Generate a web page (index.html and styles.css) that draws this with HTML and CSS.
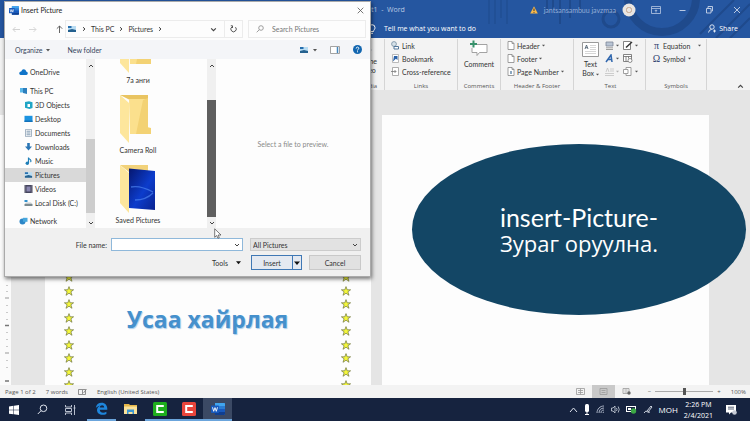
FILE: index.html
```html
<!DOCTYPE html>
<html lang="en">
<head>
<meta charset="utf-8">
<title>Insert Picture</title>
<link rel="stylesheet" href="styles.css">
</head>
<body>
<svg class="defs" aria-hidden="true">
  <symbol id="star" viewBox="0 0 10 10"><path d="M5 .6 6.2 3.8H9.6L6.9 5.8 8 9.3 5 7.2 2 9.3 3.1 5.8.4 3.8H3.8Z" fill="#f4f73c" stroke="#6d7440" stroke-width=".7"/></symbol>
  <symbol id="down" viewBox="0 0 6 6"><path d="M1 2l2 2 2-2" fill="none" stroke="#444" stroke-width="1"/></symbol>
  <symbol id="up" viewBox="0 0 6 6"><path d="M1 4l2-2 2 2" fill="none" stroke="#444" stroke-width="1"/></symbol>
  <symbol id="tri" viewBox="0 0 4 4"><path d="M0 1h4L2 3.4z" fill="#555"/></symbol>
  <symbol id="right" viewBox="0 0 4 6"><path d="M1 1.2l2 1.8-2 1.8" fill="none" stroke="#444"/></symbol>
  <symbol id="pic" viewBox="0 0 10 8"><path d="M1 1h8v6H1z" fill="#b9dcf2"/><path d="M1 1h3.500v2H1z" fill="#276fae"/><path d="M1 5l4-1 4 1v2H1z" fill="#24618f"/></symbol>
  <symbol id="word" viewBox="0 0 14 12"><path d="M4 0h9q1 0 1 1v10q0 1-1 1H4z" fill="#2b7cd3"/><path d="M4 0h9q1 0 1 1v2H4z" fill="#41a5ee"/><path d="M4 6h10v3H4z" fill="#185abd"/><path d="M4 9h10v2q0 1-1 1H4z" fill="#103f91"/><rect y="2.500" width="8" height="7.500" rx=".7" fill="#185abd"/><path d="M1.500 4.300l1.200 4L4 4.600l1.300 3.700 1.200-4" fill="none" stroke="#fff" stroke-width=".9"/></symbol>
  <symbol id="folder" viewBox="0 0 38 48"><path d="M1 0h28v5h-18z" fill="#e9c461"/><path d="M10 4h19v28l3 1v6H11z" fill="#fbe08d"/><path d="M29 3v30h3v6H17L24 5z" fill="#f3d274"/><path d="M1 0l9 8v40L1 38z" fill="#fde69c"/></symbol>
  <symbol id="page" viewBox="0 0 8 9"><path d="M1 .5h4l2 2v6H1zM5 .5v2h2" fill="#fff" stroke="#888" stroke-width=".8"/></symbol>
</svg>

<header class="titlebar">
  <svg class="swirls" viewBox="0 0 380 38" aria-hidden="true"><g fill="none" stroke="#1f4a8c"><circle cx="292" cy="-2" r="34" stroke-width="8"/><circle cx="241" cy="19" r="8" stroke-width="3"/><path d="M119 0v24M125 0v24M131 0v18M137 0v24" stroke-width="1"/><path d="M346 38l34-34M330 34l34-34M360 38l20-20" stroke-width="2"/><path d="M177 0v14M183 0v10M190 0v24M200 0v18M210 0v12" stroke-width="2"/></g></svg>
  <div class="title-row">
    <span class="doc-name">t1 &nbsp;-&nbsp; Word</span>
    <span class="account">
      <svg width="8" height="8" viewBox="0 0 8 8"><path d="M4 .3 7.800 7.500H.2z" fill="#f8b84a"/><path d="M4 2.500v2.600M4 6v.8" stroke="#333"/></svg>
      <span>jantsansambuu javzmaa</span>
      <svg width="14" height="14" viewBox="0 0 14 14"><circle cx="7" cy="7" r="6.500" fill="#e9e5e2"/><rect x="4.500" y="4.500" width="5" height="5" rx="2" fill="none" stroke="#c4a58c"/></svg>
    </span>
    <span class="window-buttons">
      <button aria-label="Ribbon display options"><svg width="10" height="8" viewBox="0 0 10 8"><path d="M.5.500h9v7h-9zM.5 2.500h9M5 6.500V4M3.800 5 5 3.800 6.200 5" fill="none" stroke="#b9c9e3" stroke-width=".8"/></svg></button>
      <button aria-label="Minimize"><svg width="7" height="8" viewBox="0 0 7 8"><path d="M.5 4.500h6" stroke="#b9c9e3"/></svg></button>
      <button aria-label="Restore"><svg width="7" height="8" viewBox="0 0 7 8"><path d="M.5 2.500h4.500v4.500H.5zM2 2.500v-2h4.500V5H5" fill="none" stroke="#c9d5e9" stroke-width=".9"/></svg></button>
      <button aria-label="Close"><svg width="8" height="8" viewBox="0 0 8 8"><path d="M1 1l6 6M7 1 1 7" stroke="#c9d5e9" stroke-width=".9"/></svg></button>
    </span>
  </div>
  <div class="tab-row">
    <svg width="8" height="10" viewBox="0 0 8 10"><path d="M2.500 7.500C2.500 6 1 5.500 1 3.700a3 3 0 0 1 6 0C7 5.500 5.500 6 5.500 7.500zM3 9.300h2" fill="none" stroke="#fff"/></svg>
    <span class="tell">Tell me what you want to do</span>
    <button class="share"><svg width="8" height="9" viewBox="0 0 8 9"><circle cx="4" cy="3" r="2.200" fill="none" stroke="#fff" stroke-width=".8"/><path d="M.5 8.500q.5-3 3-3M5 7h3M6.500 5.500v3" fill="none" stroke="#fff" stroke-width=".8"/></svg>Share</button>
  </div>
</header>

<section class="ribbon" aria-label="Insert tab">
  <div class="group media"><div class="big"><svg width="10" height="16" viewBox="0 0 10 16"><circle cx="5" cy="11" r="4" fill="none" stroke="#a9b8c9"/><path d="M1 11h8M5 7v8" stroke="#a9b8c9"/></svg><span>Online<br>Video</span></div><h2>Media</h2></div>
  <div class="group links">
    <div class="lines">
      <button><svg width="9" height="9" viewBox="0 0 9 9"><circle cx="3" cy="3" r="2.400" fill="#d6e2ea" stroke="#748b9e" stroke-width=".8"/><path d="M3 5.500h4.500v2.500H3z" fill="#fff" stroke="#52779b"/></svg>Link</button>
      <button><svg width="9" height="9" viewBox="0 0 9 9"><path d="M1.500.500h6v8h-6z" fill="#fff" stroke="#aaa" stroke-width=".8"/><path d="M3 2h3.500v4L4.800 4.800 2 7.500z" fill="#2b62a8"/></svg>Bookmark</button>
      <button><svg width="9" height="9" viewBox="0 0 9 9"><path d="M1.500.500h6v8h-6z" fill="#fff" stroke="#999" stroke-width=".8"/><path d="M0 4.500h5M3.500 3 5 4.500 3.500 6" fill="none" stroke="#777" stroke-width=".8"/></svg>Cross-reference</button>
    </div><h2>Links</h2></div>
  <div class="group comments"><button class="big"><svg width="18" height="18" viewBox="0 0 18 18"><path d="M5 4.500h12v8H9.500L7 15.500v-3H2V8" fill="#fff" stroke="#999" stroke-width=".9"/><path d="M3.500.5v7M0 4h7" stroke="#38926c" stroke-width="2"/></svg><span>Comment</span></button><h2>Comments</h2></div>
  <div class="group headfoot">
    <div class="lines">
      <button><svg width="8" height="9"><use href="#page"/></svg>Header <svg class="t" width="3" height="3"><use href="#tri"/></svg></button>
      <button><svg width="8" height="9"><use href="#page"/></svg>Footer <svg class="t" width="3" height="3"><use href="#tri"/></svg></button>
      <button><svg width="8" height="9" viewBox="0 0 8 9"><use href="#page"/><path d="M3 4h2v3H3z" fill="#8aa6bf"/></svg>Page Number <svg class="t" width="3" height="3"><use href="#tri"/></svg></button>
    </div><h2>Header &amp; Footer</h2></div>
  <div class="group text">
    <div class="text-tools">
      <button class="big"><svg width="17" height="15" viewBox="0 0 17 15"><path d="M.5.500h16v14H.5z" fill="#fff" stroke="#999"/><path d="M3 7l1.500-4L6 7M3.500 5.700h2" fill="none" stroke="#456" stroke-width=".8"/><path d="M8 3.500h6M8 5.500h6M8 7.500h6M3 9.500h11M3 11.500h11" stroke="#ccc" stroke-width=".8"/></svg><span>Text<br>Box <svg class="t" width="3" height="3"><use href="#tri"/></svg></span></button>
      <div class="minis">
        <button aria-label="Quick Parts"><svg width="9" height="9" viewBox="0 0 9 9"><path d="M1 1h7v4H1z" fill="#b8c4d4" stroke="#7b8798" stroke-width=".8"/><path d="M1 6.800h7M1 8.500h7" stroke="#888" stroke-width=".8"/></svg><svg class="t" width="3" height="3"><use href="#tri"/></svg></button>
        <button aria-label="Signature Line"><svg width="10" height="9" viewBox="0 0 10 9"><path d="M.5.500h7v8h-7z" fill="#fff" stroke="#666" stroke-width=".8"/><path d="M3 6.500 9 1" stroke="#333" stroke-width="1.500"/></svg><svg class="t" width="3" height="3"><use href="#tri"/></svg></button>
        <button aria-label="WordArt"><svg width="9" height="9" viewBox="0 0 9 9"><path d="M1 8 6 1l1 7M3 5.500h4" fill="none" stroke="#2f66ad" stroke-width="1.500"/></svg><svg class="t" width="3" height="3"><use href="#tri"/></svg></button>
        <button aria-label="Date and Time"><svg width="10" height="9" viewBox="0 0 10 9"><path d="M.5.500h8v7h-8zM.5 2.500h8M3 2.500v5M5.500 2.500v2" fill="#fff" stroke="#666" stroke-width=".8"/><circle cx="7" cy="6.500" r="2" fill="#fff" stroke="#777" stroke-width=".8"/></svg></button>
        <button aria-label="Drop Cap"><svg width="9" height="9" viewBox="0 0 9 9"><path d="M1 5l1.500-4L4 5M5 2h4M5 4h4M0 6.500h9M0 8.500h9" fill="none" stroke="#c3c3c3" stroke-width=".8"/></svg><svg class="t pale" width="3" height="3"><use href="#tri"/></svg></button>
        <button aria-label="Object"><svg width="10" height="9" viewBox="0 0 10 9"><path d="M3 2V.500h5v8H3V7M.5 2.500h4.500v4H.5z" fill="#fff" stroke="#888" stroke-width=".8"/></svg><svg class="t" width="3" height="3"><use href="#tri"/></svg></button>
      </div>
    </div><h2>Text</h2></div>
  <div class="group symbols">
    <div class="lines">
      <button><b>π</b>Equation <svg class="t far" width="3" height="3"><use href="#tri"/></svg></button>
      <button><b>Ω</b>Symbol <svg class="t" width="3" height="3"><use href="#tri"/></svg></button>
    </div><h2>Symbols</h2></div>
  <button class="collapse" aria-label="Collapse the ribbon"><svg width="7" height="7"><use href="#up"/></svg></button>
</section>

<main class="workspace">
  <div class="ruler" aria-hidden="true"><svg width="11" height="108" viewBox="0 0 11 108"><path d="M7 8v1M7 14v1M5 21h4M7 28v1M7 35v1M7 42v1M7 55v1M7 62v1M7 69v1M5 76h4M7 83v1M7 90v1" stroke="#999"/><path d="M5 48.500h4M5 104h4" stroke="#777" stroke-width="1.500"/></svg></div>
  <article class="page first">
    <div class="stars"><svg><use href="#star"/></svg><svg><use href="#star"/></svg><svg><use href="#star"/></svg><svg><use href="#star"/></svg><svg><use href="#star"/></svg><svg><use href="#star"/></svg><svg><use href="#star"/></svg><svg><use href="#star"/></svg><svg><use href="#star"/></svg></div>
    <h1>Усаа хайрлая</h1>
    <div class="stars"><svg><use href="#star"/></svg><svg><use href="#star"/></svg><svg><use href="#star"/></svg><svg><use href="#star"/></svg><svg><use href="#star"/></svg><svg><use href="#star"/></svg><svg><use href="#star"/></svg><svg><use href="#star"/></svg><svg><use href="#star"/></svg></div>
  </article>
  <article class="page second"></article>
</main>

<footer class="status">
  <span>Page 1 of 2</span><span>7 words</span>
  <svg width="9" height="8" viewBox="0 0 9 8"><path d="M.5 1.500h4v5h-4zM4.500 1.500h3v5h-3M5.500 5l3-4" fill="none" stroke="#777" stroke-width=".8"/></svg>
  <span>English (United States)</span>
  <div class="views">
    <button aria-label="Read mode"><svg width="9" height="7" viewBox="0 0 9 7"><path d="M.5.500h8v6h-8zM4.500.5v6M2 2.500h5M2 4.500h5" fill="none" stroke="#999" stroke-width=".8"/></svg></button>
    <button class="on" aria-label="Print layout"><svg width="9" height="7" viewBox="0 0 9 7"><path d="M1 .5h7v6H1zM2.500 2.500h4M2.500 4.500h4" fill="none" stroke="#999" stroke-width=".8"/></svg></button>
    <button aria-label="Web layout"><svg width="9" height="7" viewBox="0 0 9 7"><path d="M1 .5h6v5H1zM2.500 2h3M2.500 4h3" fill="none" stroke="#999" stroke-width=".8"/><circle cx="7" cy="5" r="1.700" fill="#666"/></svg></button>
  </div>
  <span class="zoom"><span>−</span><input type="range" aria-label="Zoom" value="50"><span>+</span></span><span class="pct">100%</span>
</footer>

<nav class="taskbar" aria-label="Taskbar">
  <div class="apps sys">
    <button aria-label="Start"><svg width="10" height="10" viewBox="0 0 10 10"><path d="M0 1.400 4.500.800v4H0zM5 .7 10 0v4.800H5zM0 5.300h4.500v4L0 8.700zM5 5.300h5V10L5 9.300z" fill="#fff"/></svg></button>
    <button aria-label="Search"><svg width="11" height="11" viewBox="0 0 11 11"><circle cx="6.500" cy="4.300" r="3.300" fill="none" stroke="#dfe4ee"/><path d="M4.200 6.600.8 10" stroke="#dfe4ee"/></svg></button>
    <button aria-label="Task view"><svg width="11" height="10" viewBox="0 0 11 10"><path d="M.5 0v2h6V0M.5 10V8h6v2M.5 3.500h6v3h-6zM9.500 0v10M8.500 3h2" fill="none" stroke="#c9d0de" stroke-width=".9"/></svg></button>
  </div>
  <div class="apps">
    <button class="run" aria-label="Edge"><svg width="13" height="13" viewBox="0 0 13 13"><path d="M.8 6C1.200 2.500 3.500.700 6.500.700c3.700 0 5.800 2.700 5.800 6v1.100H4.700c.2 3.200 4 3.500 6.700 1.900v2.200C7 13.900 2 12.500 2 8c0-2 1.200-3.500 3-4.300C3 4 1.800 5 .8 6zm4-.4h4.400C9.200 2.500 5 2.700 4.800 5.600z" fill="#1e86dd"/></svg></button>
    <button aria-label="File Explorer"><svg width="13" height="11" viewBox="0 0 13 11"><path d="M0 1h5l1 1h7v9H0z" fill="#e6b74a"/><path d="M0 3.500h13V11H0z" fill="#fbe29a"/><path d="M3 6.500h7V11H8.500V9h-4v2H3z" fill="#3b96d2"/></svg></button>
    <button class="run" aria-label="Camtasia"><svg width="14" height="14"><rect width="14" height="14" rx="1.500" fill="#1eae1d"/><path d="M9.800 5V4H4.200v6h5.600V9" fill="none" stroke="#fff" stroke-width="2"/></svg></button>
    <button class="run" aria-label="Camtasia Recorder"><svg width="14" height="14"><rect width="14" height="14" rx="1.500" fill="#e9453c"/><path d="M9.800 5V4H4.200v6h5.600V9" fill="none" stroke="#fff" stroke-width="2"/></svg></button>
    <button class="run current" aria-label="Word"><svg width="14" height="12"><use href="#word"/></svg></button>
  </div>
  <div class="tray">
    <svg width="9" height="8" viewBox="0 0 9 8"><path d="M1 6l3.500-4L8 6" fill="none" stroke="#dfe4ee"/></svg>
    <svg width="6" height="11" viewBox="0 0 6 11"><rect x="1" width="4" height="8" rx="1.500" fill="#fff"/><path d="M3 8v2M1 10.500h4" stroke="#fff"/></svg>
    <svg width="9" height="9" viewBox="0 0 9 9"><path d="M1 8C1 4 4 1 8 1M3 8c0-3 2-5 5-5M5 8c0-2 1-3 3-3M7 8c0-.700.300-1 1-1" fill="none" stroke="#b9c1d1" stroke-width=".9"/></svg>
    <svg width="9" height="9" viewBox="0 0 9 9"><path d="M.5 3h1.500l2-2v7l-2-2H.5zM5.500 3q1 1.500 0 3M7.200 1.500q2 3 0 6" fill="none" stroke="#cfd5e0" stroke-width=".8"/></svg>
    <svg width="11" height="9" viewBox="0 0 11 9"><rect x=".5" y="1.500" width="9" height="5" fill="none" stroke="#fff"/><path d="M2 3h3v2H2z" fill="#fff"/><circle cx="7.500" cy="6" r="2.700" fill="#3ca845"/></svg>
    <svg width="10" height="10" viewBox="0 0 10 10"><path d="M1 8q2-3 3-1.500T7 7M4 6l4-5 1 1-4 5" fill="none" stroke="#dfe4ee" stroke-width=".9"/></svg>
    <span class="lang">МОН</span>
    <time>2:26 PM<br>2/4/2021</time>
    <svg width="11" height="10" viewBox="0 0 11 10"><path d="M0 0h10v7.500H5L3 9.500v-2H0z" fill="#fff"/><path d="M2 2.200h6M2 4h6" stroke="#16233f" stroke-width=".7"/><circle cx="8.500" cy="7.500" r="2.300" fill="#c7ccd6"/></svg>
  </div>
</nav>

<div class="callout"><p>insert-Picture-</p><p class="mn">Зураг оруулна.</p></div>

<section class="dialog" role="dialog" aria-label="Insert Picture">
  <div class="dlg-title"><svg width="10" height="9"><use href="#word"/></svg><span>Insert Picture</span><button aria-label="Close dialog"><svg width="7" height="7" viewBox="0 0 7 7"><path d="M.7.700l5.600 5.600M6.300.7.700 6.300" stroke="#555" stroke-width=".8"/></svg></button></div>
  <div class="dlg-nav">
    <button aria-label="Back"><svg width="8" height="7" viewBox="0 0 8 7"><path d="M8 3.500H1M3.500 1 1 3.500 3.500 6" fill="none" stroke="#d2d2d2"/></svg></button>
    <button aria-label="Forward"><svg width="8" height="7" viewBox="0 0 8 7"><path d="M0 3.500h7M4.500 1 7 3.500 4.500 6" fill="none" stroke="#d8d8d8"/></svg></button>
    <button class="upward" aria-label="Up"><svg width="7" height="8" viewBox="0 0 7 8"><path d="M3.500 8V1M.8 3.700 3.500 1l2.700 2.700" fill="none" stroke="#555" stroke-width=".9"/></svg></button>
    <div class="address"><svg width="10" height="8"><use href="#pic"/></svg><svg width="4" height="6"><use href="#right"/></svg><span>This PC</span><svg width="4" height="6"><use href="#right"/></svg><span>Pictures</span><svg width="4" height="6"><use href="#right"/></svg><button class="drop" aria-label="Previous locations"><svg width="7" height="7"><use href="#down"/></svg></button></div>
    <button class="refresh" aria-label="Refresh"><svg width="7" height="8" viewBox="0 0 7 8"><path d="M5.500 2.200A2.700 2.700 0 1 1 1.800 2M.8.800h1.700V3" fill="none" stroke="#444" stroke-width=".9"/></svg></button>
    <label class="search"><svg width="8" height="8" viewBox="0 0 8 8"><circle cx="5" cy="3" r="2.300" fill="none" stroke="#888" stroke-width=".8"/><path d="M3.300 4.700.7 7.300" stroke="#888" stroke-width=".8"/></svg><input type="text" placeholder="Search Pictures" aria-label="Search Pictures"></label>
  </div>
  <div class="dlg-tools">
    <button>Organize <svg width="4" height="4"><use href="#tri"/></svg></button><button>New folder</button>
    <span class="right"><button aria-label="Change view"><svg width="10" height="8"><use href="#pic"/></svg><svg width="4" height="4"><use href="#tri"/></svg></button>
    <button aria-label="Preview pane"><svg width="10" height="8" viewBox="0 0 10 8"><path d="M.5.500h9v7h-9z" fill="#fff" stroke="#999" stroke-width=".9"/><path d="M7.500 1v6" stroke="#4687bc" stroke-width="1.500"/></svg></button>
    <button aria-label="Help"><svg width="9" height="9" viewBox="0 0 9 9"><circle cx="4.500" cy="4.500" r="4.500" fill="#1266b0"/><path d="M3.200 3.500c0-2 2.700-1.700 2.600-.1C5.800 4.300 4.500 4.300 4.500 5.500M4.500 6.300v1" fill="none" stroke="#fff"/></svg></button></span>
  </div>
  <div class="dlg-body">
    <ul class="tree">
      <li><svg viewBox="0 0 9 8"><path d="M1.500 7Q0 6.500.2 5q.5-1.700 2-1.500Q3 1 5 1.200q2 .2 2.200 2.300Q9 4 8.800 5.500 8.500 7 7 7z" fill="#0f74c8"/></svg>OneDrive</li>
      <li class="top"><svg viewBox="0 0 9 8"><path d="M1 1h6v4.500H1z" fill="#58b7ea"/><path d="M4 1h4v6L4 6z" fill="#2d7fbd"/></svg>This PC</li>
      <li class="sub"><svg viewBox="0 0 9 8"><path d="M1 1l4-.800 3.500 1V7l-3 1L1 6.800z" fill="#20a5c5"/><path d="M3.500 3h2.500v3H3.500z" fill="#fff"/></svg>3D Objects</li>
      <li class="sub"><svg viewBox="0 0 9 8"><path d="M.5.800h8v6.200h-8z" fill="#1c93e0"/><path d="M.5 5.500h8V7h-8z" fill="#1370b8"/></svg>Desktop</li>
      <li class="sub"><svg viewBox="0 0 9 8"><path d="M1.500.400h6v7.200h-6z" fill="#fff" stroke="#8fa2b5" stroke-width=".8"/><path d="M2.500 2.200h4M2.500 4h4M2.500 5.800h4" stroke="#5d7e9c" stroke-width=".8"/></svg>Documents</li>
      <li class="sub"><svg viewBox="0 0 9 8"><path d="M3.200 0h2.600v3.500H8L4.500 7.500 1 3.500h2.200z" fill="#2b76b5"/></svg>Downloads</li>
      <li class="sub"><svg viewBox="0 0 9 8"><path d="M4.500 6V.500Q4.700 2 6.500 2.800q1 1 0 2.200" fill="none" stroke="#1f7fb8" stroke-width="1.200"/><circle cx="3.300" cy="6.200" r="1.700" fill="#1f7fb8"/></svg>Music</li>
      <li class="sub sel"><svg viewBox="0 0 10 8"><use href="#pic"/></svg>Pictures</li>
      <li class="sub"><svg viewBox="0 0 9 8"><path d="M.5 0h8v8h-8z" fill="#45455d"/><path d="M2.500 1.500h4v5h-4z" fill="#8a87b0"/><path d="M1.200.5v7M7.800.5v7" stroke="#ccc" stroke-width=".6" stroke-dasharray="1 1"/></svg>Videos</li>
      <li class="sub"><svg viewBox="0 0 9 8"><path d="M.5 1h3v2h-3z" fill="#2f91cf"/><path d="M.5 5h8v2h-8z" fill="#7c8a8e"/><path d="M.5 5l1.500-1.500h5L8.500 5z" fill="#c5cdd0"/></svg>Local Disk (C:)</li>
      <li class="net"><svg viewBox="0 0 9 8"><circle cx="3.500" cy="4.500" r="3" fill="#2c86c7"/><path d="M4 .8h4.500v4H4z" fill="#47a7dd"/></svg>Network</li>
    </ul>
    <div class="bar light"><svg><use href="#up"/></svg><i></i><svg><use href="#down"/></svg></div>
    <div class="files">
      <figure><svg><use href="#folder"/></svg><figcaption>7а анги</figcaption></figure>
      <figure><svg><use href="#folder"/></svg><figcaption>Camera Roll</figcaption></figure>
      <figure><svg viewBox="0 0 38 48"><defs><linearGradient id="blue" x2="1" y2="1"><stop offset="0" stop-color="#06176f"/><stop offset=".55" stop-color="#0c3ccc"/><stop offset="1" stop-color="#0a2390"/></linearGradient></defs><path d="M1 0h28v7H10z" fill="#f2d27a"/><path d="M10 3.500 36 6v39l-26-2z" fill="url(#blue)"/><path d="M12 22q9-2 22 5M16 35q11 0 18-7" fill="none" stroke="#4c83ef" stroke-width="1.300" opacity=".7"/><path d="M1 0l9 8v40L1 38z" fill="#fde69c"/></svg><figcaption>Saved Pictures</figcaption></figure>
    </div>
    <div class="bar dark"><svg><use href="#up"/></svg><i></i><svg><use href="#down"/></svg></div>
    <p class="preview">Select a file to preview.</p>
  </div>
  <form class="dlg-foot">
    <label for="fname">File name:</label>
    <span class="field"><input id="fname" type="text" autofocus><svg width="6" height="6"><use href="#down"/></svg></span>
    <span class="field"><select aria-label="File type"><option>All Pictures</option></select><svg width="6" height="6"><use href="#down"/></svg></span>
    <div class="actions">
      <button type="button" class="plain">Tools <svg width="5" height="5" viewBox="0 0 4 4"><path d="M0 1h4L2 3.400z" fill="#111"/></svg></button>
      <span class="split"><button type="button">Insert</button><button type="button" aria-label="Insert options"><svg width="6" height="6" viewBox="0 0 4 4"><path d="M0 1h4L2 3.400z" fill="#111"/></svg></button></span>
      <button type="button" class="cancel">Cancel</button>
    </div>
  </form>
  <svg class="cursor" viewBox="0 0 8 11" aria-hidden="true"><path d="M.7.800v8.500l2-1.800 1.200 2.700 1.400-.600L4.100 7h2.900z" fill="#fff" stroke="#444" stroke-width=".7"/></svg>
</section>
</body>
</html>
```

FILE: styles.css
```css
* { box-sizing: border-box; }
body {
  margin: 0;
  height: 100vh;
  display: flex;
  flex-direction: column;
  overflow: hidden;
  position: relative;
  background: #e5e5e5;
  color: #333;
  font: 7px/10px Lato, "Open Sans", sans-serif;
}
button, input, select { font: inherit; color: inherit; margin: 0; padding: 0; border: 0; background: none; }
button { display: flex; align-items: center; justify-content: center; }
svg { display: block; flex: none; }
h1, h2, p, ul, figure { margin: 0; padding: 0; font-weight: normal; }
.defs { position: absolute; width: 0; height: 0; }

/* Word title bar */
.titlebar { position: relative; background: #2556a0; color: #fff; flex: none; }
.swirls { position: absolute; right: 0; top: 0; width: 380px; height: 38px; }
.title-row, .tab-row { position: relative; display: flex; align-items: center; height: 19px; padding-left: 371px; }
.doc-name { color: #b9c9e3; font-family: "Open Sans", sans-serif; }
.account { display: flex; align-items: center; gap: 6px; margin-left: auto; color: #93add6; }
.window-buttons { display: flex; margin-left: 6px; }
.window-buttons button { width: 27px; }
.tab-row { padding-left: 368px; padding-right: 12px; }
.tell { margin-left: 8px; font-family: "Open Sans", sans-serif; }
.share { margin-left: auto; gap: 3px; font-family: "Open Sans", sans-serif; }

/* ribbon */
.ribbon { display: flex; height: 52px; flex: none; background: #f3f3f3; }
.group { display: flex; flex-direction: column; justify-content: space-between; border-right: 1px solid #d5d5d5; margin-top: 1px; padding-left: 6px; }
.group h2 { font: 6px/8px "Open Sans", sans-serif; text-align: center; color: #555; padding-right: 6px; }
.media { width: 385px; align-items: flex-end; padding-right: 7px; }
.group.media h2, .group.comments h2 { padding: 0; }
.links { width: 73px; }
.comments { width: 43px; padding-left: 0; }
.headfoot { width: 73px; }
.text { width: 72px; padding-left: 8px; }
.symbols { width: 61px; }
.lines button { height: 13px; gap: 2px; white-space: nowrap; }
.lines b { width: 9px; font: 10px/12px "Liberation Serif", serif; color: #2f3f70; }
.big { display: flex; flex-direction: column; align-items: center; line-height: 9px; gap: 2px; text-align: center; }
.comments .big { width: 100%; padding-top: 1px; }
.text .big { padding-top: 3px; gap: 3px; }
.big .t { display: inline; }
.far { margin-left: 6px; }
.pale { opacity: .4; }
.text-tools { display: flex; gap: 6px; }
.minis { display: grid; grid-template-columns: 18px 18px; grid-auto-rows: 13px; }
.minis button { justify-content: flex-start; gap: 2px; }
.collapse { margin-left: auto; align-self: flex-end; padding: 0 6px 0 0; }

/* document */
.workspace { flex: 1; display: flex; min-height: 0; overflow: hidden; padding-top: 25px; }
.ruler { width: 11px; background: #fbfbfb; display: flex; align-items: flex-end; }
.page { background: #fdfdfd; }
.first { width: 326px; margin-left: 34px; padding: 157px 20px 0 19px; display: flex; justify-content: space-between; }
.second { width: 327px; margin-left: 11px; }
.stars { width: 10px; height: 118px; display: flex; flex-direction: column; justify-content: space-between; }
.stars svg { width: 10px; height: 10px; }
h1 { padding-top: 31px; font: bold 23px/32px "Open Sans", sans-serif; color: #4590cc; text-shadow: 1px 1px 1px #a9cdeb; white-space: nowrap; }
.callout {
  position: absolute; left: 412px; top: 144px; width: 334px; height: 171px;
  border-radius: 50%; background: #134665; color: #fff;
  display: flex; flex-direction: column; align-items: center; justify-content: center;
  font: 25px/26px Lato, "Open Sans", sans-serif;
}
.callout .mn { font: 22px/26px "Open Sans", sans-serif; }

/* status bar */
.status { display: flex; align-items: center; gap: 10px; height: 13px; flex: none; padding: 0 4px 0 5px; background: #f3f3f3; color: #555; font: 6px/10px "Open Sans", sans-serif; }
.views { display: flex; margin-left: auto; }
.views button { width: 23px; height: 13px; }
.views .on { background: #c9c9c9; }
.zoom { display: flex; align-items: center; gap: 4px; }
.zoom input { appearance: none; width: 58px; height: 8px; background: linear-gradient(#aaa, #aaa) center / 100% 1px no-repeat; }
.zoom input::-webkit-slider-thumb { appearance: none; width: 3px; height: 7px; background: #555; }

/* taskbar */
.taskbar { display: flex; height: 23px; flex: none; background: #16233f; color: #fff; font-family: "Open Sans", sans-serif; }
.apps { display: flex; }
.apps button { width: 29px; height: 23px; border-bottom: 2px solid transparent; }
.sys { padding-right: 3px; }
.sys button { width: 28px; border: 0; }
.apps .run { border-color: #6ba5dc; background-clip: padding-box; }
.apps .current { background: #3b4964; }
.tray { display: flex; align-items: center; gap: 6px; margin-left: auto; padding-right: 13px; }
.lang { font-size: 8px; }
.tray time { text-align: center; line-height: 11px; margin-right: 7px; }

/* insert picture dialog */
.dialog {
  position: absolute; left: 4px; top: 1px; width: 367px;
  border: 1px solid #aaa; background: #fdfdfd; box-shadow: 1px 2px 4px #0008;
}
.dlg-title { display: flex; align-items: center; height: 16px; padding: 0 6px 0 4px; gap: 2px; color: #222; }
.dlg-title button { margin-left: auto; }
.dlg-nav { display: flex; align-items: center; height: 22px; padding: 0 4px 0 7px; gap: 9px; }
.upward { margin-left: 10px; }
.address { display: flex; align-items: center; gap: 5px; flex: 1; height: 18px; border: 1px solid #ececec; border-right: 0; padding: 0 7px 0 1px; margin-left: -7px; }
.drop { margin-left: auto; }
.refresh { width: 19px; height: 18px; border: 1px solid #ececec; margin-left: -9px; }
.search { display: flex; align-items: center; width: 118px; height: 18px; border: 1px solid #ececec; padding-left: 7px; gap: 8px; margin-left: -4px; }
.search input { width: 80px; outline: 0; }
.search input::placeholder { color: #777; opacity: 1; }
.dlg-tools { display: flex; align-items: center; height: 19px; padding: 0 8px 0 10px; gap: 18px; background: #f4f5f8; color: #37455c; }
.dlg-tools button { gap: 3px; }
.right { display: flex; gap: 13px; margin-left: auto; }
.right button:first-child { gap: 4px; }
.dlg-body { display: grid; grid-template-columns: 81px 9px 112px 9px 1fr; height: 169px; }
.tree { list-style: none; padding-top: 6px; }
.tree li { display: flex; align-items: center; gap: 2px; height: 14px; padding-left: 14px; white-space: nowrap; }
.tree svg { width: 9px; height: 8px; }
.tree .top { margin-top: 5px; }
.tree .sub { padding-left: 19px; }
.tree .sel { background: #d9d9d9; }
.tree .net { margin-top: 4px; }
.bar { display: flex; flex-direction: column; align-items: center; justify-content: space-between; padding: 4px 0 2px; background: #f0f0f0; }
.bar svg { width: 6px; height: 6px; }
.bar i { width: 100%; margin-top: auto; margin-bottom: 7px; }
.light i { height: 74px; background: #cdcdcd; }
.dark i { height: 117px; margin-bottom: 3px; background: #5f5f5f; }
.files { display: flex; flex-direction: column; justify-content: flex-end; gap: 7px; overflow: hidden; padding-left: 9px; }
.files figure { flex: none; width: 68px; }
.files figure svg { width: 38px; height: 48px; margin: 0 auto; }
.files figcaption { height: 15px; line-height: 15px; text-align: center; }
.preview { display: flex; align-items: center; justify-content: center; color: #8a8a8a; }
.dlg-foot { display: grid; grid-template-columns: 102px 1fr 111px; column-gap: 4px; row-gap: 4px; padding: 10px 9px 6px 0; background: #f0f0f0; align-items: center; }
.dlg-foot label { text-align: right; }
.field { position: relative; height: 13px; display: flex; }
.field input { flex: 1; min-width: 0; margin-right: 3px; padding-left: 2px; border: 1px solid #8fb8da; background: #fff; outline: 0; }
.field select { appearance: none; flex: 1; padding-left: 2px; border: 1px solid #ccc; background: #e2e2e2; }
.field svg { position: absolute; right: 3px; top: 4px; }
.field input + svg { right: 6px; }
.actions { grid-column: 1 / -1; display: flex; justify-content: flex-end; height: 15px; }
.plain { gap: 8px; margin-right: 10px; }
.split { display: flex; width: 51px; border: 1px solid #3f78b5; margin-right: 7px; background: #e4e9f1; }
.split button { flex: 1; }
.split button + button { flex: none; width: 9px; border-left: 1px solid #3f78b5; }
.cancel { width: 52px; background: #e1e1e1; border: 1px solid #c9c9c9; }
.cursor { position: absolute; left: 209px; top: 226px; width: 8px; height: 11px; }
```
